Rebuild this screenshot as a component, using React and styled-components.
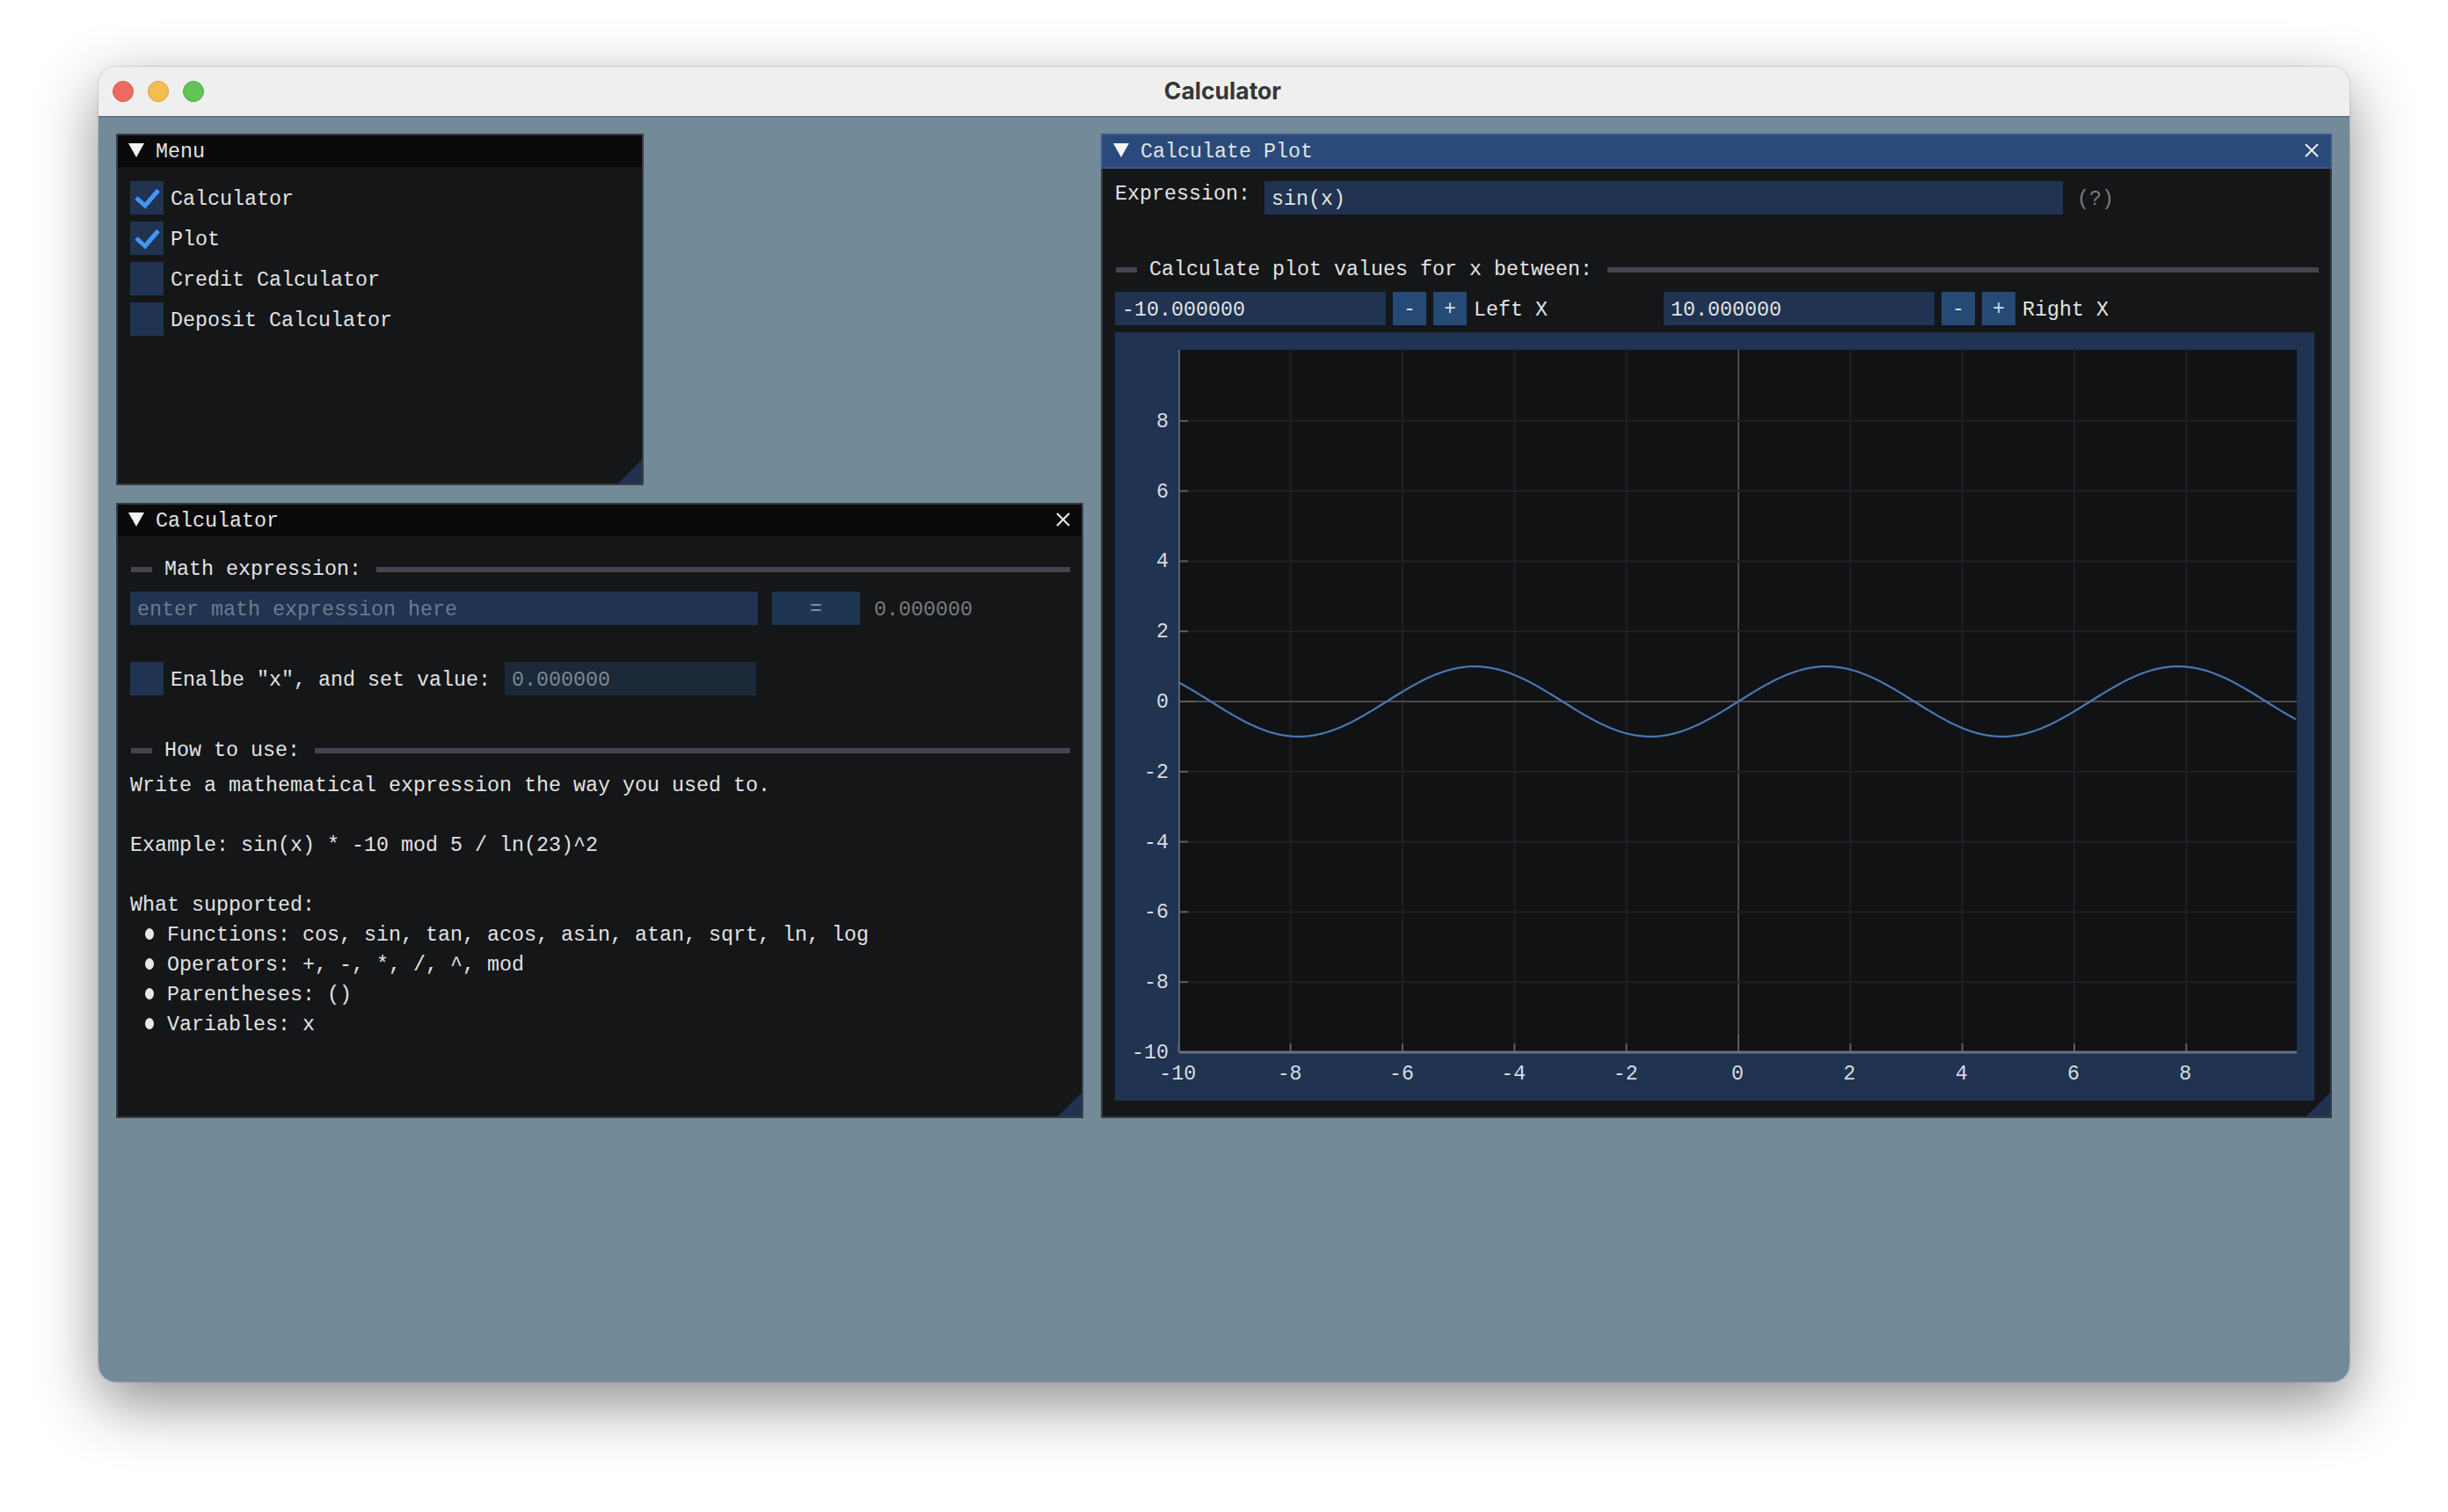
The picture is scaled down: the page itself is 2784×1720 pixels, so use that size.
import React from "react";
import styled, { createGlobalStyle } from "styled-components";

const GlobalStyle = createGlobalStyle`
    html, body {
        margin: 0;
        padding: 0;
        background: #ffffff;
    }
    * {
        box-sizing: border-box;
    }
`;

const Desktop = styled.div`
    width: 2784px;
    height: 1720px;
    padding: 76px 112px 0;
    background: #ffffff;
    font-family: "Liberation Mono", monospace;
    font-size: 23.33px;
    color: #e2e2e2;
`;

const AppWindow = styled.div`
    width: 2560px;
    height: 1496px;
    border-radius: 20px;
    overflow: hidden;
    box-shadow: 0 24px 70px rgba(0, 0, 0, 0.45), 0 0 2px rgba(0, 0, 0, 0.35);
`;

const TitleBar = styled.div`
    height: 57px;
    padding: 0 16px;
    display: grid;
    grid-template-columns: 1fr auto 1fr;
    align-items: center;
    background: #efefef;
    border-bottom: 1px solid #4f626f;
`;

const Lights = styled.div`
    display: flex;
    gap: 16px;
`;

const Light = styled.span`
    width: 24px;
    height: 24px;
    border-radius: 50%;
    background: ${props => props.$color};
    border: 1px solid ${props => props.$edge};
`;

const WindowTitle = styled.div`
    font-family: "Inter", "Liberation Sans", sans-serif;
    font-size: 26.5px;
    font-weight: 700;
    color: #363636;
    margin: -3px 0 0 -3px;
`;

const Workspace = styled.div`
    height: 1439px;
    padding: 19px 20px 20px;
    display: flex;
    gap: 20px;
    align-items: flex-start;
    background: #738a99;
`;

const LeftColumn = styled.div`
    display: flex;
    flex-direction: column;
    gap: 20px;
`;

const Panel = styled.section`
    position: relative;
    width: ${props => props.$w}px;
    height: ${props => props.$h}px;
    display: flex;
    flex-direction: column;
    background: #141618;
    border: 2px solid #3a3b45;
`;

const PanelTitle = styled.header`
    height: 36px;
    flex: none;
    padding: 0 13px 0 12px;
    display: flex;
    align-items: center;
    gap: 13px;
    color: #e2e2e2;
    background: ${props => (props.$active ? "#294a7a" : "#0a0a0a")};
    box-shadow: ${props => (props.$active ? "0 0 0 2px #3a5a8c" : "none")};
`;

const TitleText = styled.span`
    padding-top: 2px;
`;

const Triangle = styled.span`
    width: 18px;
    height: 16px;
    margin-top: -2px;
    background: #f4f4f4;
    clip-path: polygon(0 0, 100% 0, 50% 100%);
`;

const CloseIcon = styled.svg`
    width: 16px;
    height: 16px;
    margin-left: auto;
    margin-top: -2px;
`;

const Grip = styled.span`
    position: absolute;
    right: 0;
    bottom: 0;
    width: 27px;
    height: 27px;
    background: #1f3350;
    clip-path: polygon(100% 0, 100% 100%, 0 100%);
`;

const Body = styled.div`
    flex: 1;
    padding: ${props => props.$top || 0}px 13px 0 14px;
    display: flex;
    flex-direction: column;
`;

const CheckList = styled.div`
    display: flex;
    flex-direction: column;
    gap: 8px;
`;

const CheckRow = styled.div`
    display: flex;
    align-items: center;
    gap: 8px;
    height: 38px;
    margin-top: ${props => props.$mt || 0}px;
`;

const CheckLabel = styled.span`
    padding-top: 3px;
`;

const CheckBox = styled.span`
    width: 38px;
    height: 38px;
    flex: none;
    background: #203350;
`;

const CheckMark = styled.svg`
    display: block;
    width: 38px;
    height: 38px;
`;

const SepRow = styled.div`
    height: 34px;
    flex: none;
    display: flex;
    align-items: center;
    line-height: 34px;
    margin-top: ${props => props.$mt || 0}px;
`;

const SepDash = styled.span`
    width: 24px;
    height: 6px;
    margin: 0 14px 0 1px;
    background: #45454f;
`;

const SepLine = styled.span`
    flex: 1;
    height: 6px;
    margin-left: 17px;
    background: #45454f;
`;

const InputRow = styled.div`
    display: flex;
    gap: 16px;
    height: 38px;
    margin-top: ${props => props.$mt || 0}px;
`;

const Field = styled.div`
    width: ${props => props.$w}px;
    height: 38px;
    flex: none;
    padding-left: 8px;
    margin-left: ${props => props.$ml || 0}px;
    line-height: 43px;
    white-space: pre;
    background: ${props => (props.$off ? "#1b2838" : "#203350")};
    color: ${props => props.$ink || "#e2e2e2"};
`;

const EqualButton = styled.div`
    width: 100px;
    height: 38px;
    text-align: center;
    line-height: 41px;
    background: #1f3652;
    color: #8493a8;
`;

const DimText = styled.span`
    line-height: 43px;
    color: #7c7c7c;
`;

const Help = styled.div`
    margin-top: 6px;
    line-height: 34px;
    white-space: pre;
`;

const HelpLine = styled.div`
    height: 34px;
    margin-top: ${props => props.$gap || 0}px;
`;

const BulletRow = styled.div`
    height: 34px;
    padding-left: 17px;
    display: flex;
    align-items: center;
    gap: 15px;
`;

const Bullet = styled.span`
    width: 10px;
    height: 13px;
    margin-top: -4px;
    border-radius: 50%;
    background: #e8e8e8;
`;

const ExpressionRow = styled.div`
    display: flex;
    gap: 16px;
    height: 38px;
`;

const ExpressionLabel = styled.span`
    line-height: 30px;
`;

const RangeRow = styled.div`
    margin-top: 8px;
    display: grid;
    grid-template-columns: 624px 624px;
`;

const RangeGroup = styled.div`
    display: flex;
    gap: 8px;
    height: 38px;
    line-height: 43px;
`;

const StepButton = styled.div`
    width: 38px;
    height: 38px;
    text-align: center;
    line-height: 41px;
    background: #254a75;
    color: #d6dce4;
`;

const PlotFrame = styled.div`
    margin-top: 8px;
    width: 1364px;
    height: 874px;
    background: #203350;
`;

const PlotSvg = styled.svg`
    display: block;
    font-family: "Liberation Mono", monospace;
    font-size: 23.33px;
    fill: #d8dbe0;
`;

const Check = () => (
    <CheckMark viewBox="0 0 38 38">
        <path d="M7 19 L17 28 L32 10.5" fill="none" stroke="#4296fa" strokeWidth="5" />
    </CheckMark>
);

const Close = () => (
    <CloseIcon viewBox="0 0 16 16">
        <path d="M1 1 L15 15 M15 1 L1 15" stroke="#eeeeee" strokeWidth="2" fill="none" />
    </CloseIcon>
);

const Window = ({ title, active, closable, w, h, top, children }) => (
    <Panel $w={w} $h={h}>
        <PanelTitle $active={active}>
            <Triangle />
            <TitleText>{title}</TitleText>
            {closable && <Close />}
        </PanelTitle>
        <Body $top={top}>{children}</Body>
        <Grip />
    </Panel>
);

const Separator = ({ mt, children }) => (
    <SepRow $mt={mt}>
        <SepDash />
        <span>{children}</span>
        <SepLine />
    </SepRow>
);

const Option = ({ checked, children }) => (
    <CheckRow>
        <CheckBox>{checked && <Check />}</CheckBox>
        <CheckLabel>{children}</CheckLabel>
    </CheckRow>
);

const Range = ({ value, label }) => (
    <RangeGroup>
        <Field $w={308}>{value}</Field>
        <StepButton>-</StepButton>
        <StepButton>+</StepButton>
        <span>{label}</span>
    </RangeGroup>
);

const xTicks = [-10, -8, -6, -4, -2, 0, 2, 4, 6, 8];
const yTicks = [8, 6, 4, 2, 0, -2, -4, -6, -8, -10];
const px = v => 709 + 63.67 * v;
const py = v => 420 - 39.9 * v;
const LEFT = 73;
const RIGHT = 1344;
const TOP = 20;
const BOTTOM = 819;

const curve = () => {
    const pts = [];
    for (let x = LEFT; x <= RIGHT; x += 2) {
        const v = (x - 709) / 63.67;
        pts.push(`${x},${py(Math.sin(v)).toFixed(2)}`);
    }
    return pts.join(" ");
};

const Plot = () => (
    <PlotFrame>
        <PlotSvg width="1364" height="874" viewBox="0 0 1364 874">
            <rect x={LEFT} y={TOP} width={RIGHT - LEFT} height={BOTTOM - TOP} fill="#101214" />
            {xTicks.slice(1).map(v => (
                <line key={v} x1={px(v)} x2={px(v)} y1={TOP} y2={BOTTOM} stroke={v === 0 ? "#4a4b4d" : "#1f2124"} strokeWidth="2" />
            ))}
            {yTicks.slice(0, -1).map(v => (
                <line key={v} x1={LEFT} x2={RIGHT} y1={py(v)} y2={py(v)} stroke={v === 0 ? "#4a4b4d" : "#1f2124"} strokeWidth="2" />
            ))}
            {xTicks.map(v => (
                <line key={v} x1={px(v)} x2={px(v)} y1={BOTTOM} y2={BOTTOM - (v === 0 ? 20 : 10)} stroke="#5c5f63" strokeWidth="2" />
            ))}
            {yTicks.map(v => (
                <line key={v} x1={LEFT} x2={LEFT + (v === 0 ? 20 : 10)} y1={py(v)} y2={py(v)} stroke="#5c5f63" strokeWidth="2" />
            ))}
            <line x1={LEFT} x2={LEFT} y1={TOP} y2={BOTTOM} stroke="#5c6066" strokeWidth="2" />
            <line x1={LEFT} x2={RIGHT} y1={BOTTOM} y2={BOTTOM} stroke="#67727f" strokeWidth="3" />
            <polyline points={curve()} fill="none" stroke="#4a76b5" strokeWidth="2.2" />
            {yTicks.map(v => (
                <text key={v} x="61" y={py(v) + 7} textAnchor="end">{v}</text>
            ))}
            {xTicks.map(v => (
                <text key={v} x={px(v) - 1} y="850" textAnchor="middle">{v}</text>
            ))}
        </PlotSvg>
    </PlotFrame>
);

const App = () => (
    <Desktop>
        <GlobalStyle />
        <AppWindow>
            <TitleBar>
                <Lights>
                    <Light $color="#ee6a5f" $edge="#d9564b" />
                    <Light $color="#f5bd4f" $edge="#d8a03c" />
                    <Light $color="#61c454" $edge="#4ea842" />
                </Lights>
                <WindowTitle>Calculator</WindowTitle>
            </TitleBar>
            <Workspace>
                <LeftColumn>
                    <Window title="Menu" w={600} h={400} top={16}>
                        <CheckList>
                            <Option checked>Calculator</Option>
                            <Option checked>Plot</Option>
                            <Option>Credit Calculator</Option>
                            <Option>Deposit Calculator</Option>
                        </CheckList>
                    </Window>
                    <Window title="Calculator" closable w={1100} h={700} top={21}>
                        <Separator>Math expression:</Separator>
                        <InputRow $mt={8}>
                            <Field $w={714} $ink="#6e7a8c">enter math expression here</Field>
                            <EqualButton>=</EqualButton>
                            <DimText>0.000000</DimText>
                        </InputRow>
                        <CheckRow $mt={42}>
                            <CheckBox />
                            <CheckLabel>Enalbe "x", and set value:</CheckLabel>
                            <Field $w={286} $ml={8} $off $ink="#7d8894">0.000000</Field>
                        </CheckRow>
                        <Separator mt={46}>How to use:</Separator>
                        <Help>
                            <HelpLine>Write a mathematical expression the way you used to.</HelpLine>
                            <HelpLine $gap={34}>Example: sin(x) * -10 mod 5 / ln(23)^2</HelpLine>
                            <HelpLine $gap={34}>What supported:</HelpLine>
                            <BulletRow><Bullet /><span>Functions: cos, sin, tan, acos, asin, atan, sqrt, ln, log</span></BulletRow>
                            <BulletRow><Bullet /><span>Operators: +, -, *, /, ^, mod</span></BulletRow>
                            <BulletRow><Bullet /><span>Parentheses: ()</span></BulletRow>
                            <BulletRow><Bullet /><span>Variables: x</span></BulletRow>
                        </Help>
                    </Window>
                </LeftColumn>
                <Window title="Calculate Plot" active closable w={1400} h={1120} top={16}>
                    <ExpressionRow>
                        <ExpressionLabel>Expression:</ExpressionLabel>
                        <Field $w={908}>sin(x)</Field>
                        <DimText>(?)</DimText>
                    </ExpressionRow>
                    <Separator mt={46}>Calculate plot values for x between:</Separator>
                    <RangeRow>
                        <Range value="-10.000000" label="Left X" />
                        <Range value="10.000000" label="Right X" />
                    </RangeRow>
                    <Plot />
                </Window>
            </Workspace>
        </AppWindow>
    </Desktop>
);

export default App;
